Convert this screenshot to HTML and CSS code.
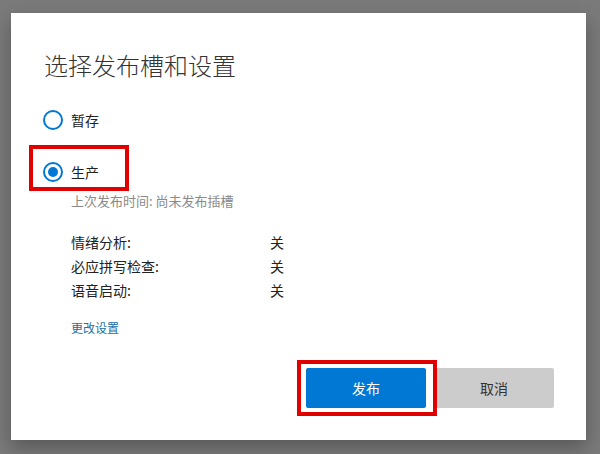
FILE: index.html
```html
<!DOCTYPE html>
<html lang="zh-CN">
<head>
<meta charset="utf-8">
<title>选择发布槽和设置</title>
<link rel="stylesheet" href="styles.css">
</head>
<body>
<div class="dialog">
  <h1 class="title">选择发布槽和设置</h1>
  <div class="options">
    <label class="option">
      <span class="radio"></span>
      <span class="option-text">暂存</span>
    </label>
    <label class="option option-highlight">
      <span class="radio radio-checked"></span>
      <span class="option-text">生产</span>
    </label>
  </div>
  <div class="details">
    <div class="last-published">上次发布时间: 尚未发布插槽</div>
    <div class="settings">
      <div class="setting-row"><span class="setting-label">情绪分析:</span><span class="setting-value">关</span></div>
      <div class="setting-row"><span class="setting-label">必应拼写检查:</span><span class="setting-value">关</span></div>
      <div class="setting-row"><span class="setting-label">语音启动:</span><span class="setting-value">关</span></div>
    </div>
    <a class="change-link" href="#">更改设置</a>
  </div>
  <div class="actions">
    <button class="btn btn-primary">发布</button>
    <button class="btn btn-secondary">取消</button>
  </div>
</div>
</body>
</html>
```
FILE: styles.css
```css
html, body {
  margin: 0;
  padding: 0;
}
body {
  width: 600px;
  height: 454px;
  overflow: hidden;
  background: #7a7a7a;
  font-family: "Noto Sans CJK SC", "Noto Sans", sans-serif;
}
.dialog {
  margin: 13px 0 0 11px;
  width: 575px;
  height: 427px;
  box-sizing: border-box;
  background: #fff;
  box-shadow: 0 8px 18px rgba(0, 0, 0, 0.28);
  padding: 36px 32px 0 33px;
  display: flex;
  flex-direction: column;
}
.title {
  margin: 0;
  font-size: 24px;
  line-height: 32px;
  font-weight: 300;
  color: #333;
}
.options {
  margin-top: 29px;
  display: flex;
  flex-direction: column;
  gap: 32px;
}
.option {
  position: relative;
  display: flex;
  align-items: center;
  gap: 8px;
  height: 20px;
  margin-left: -1px;
  font-size: 14px;
  color: #222;
}
.radio {
  width: 20px;
  height: 20px;
  box-sizing: border-box;
  border: 2px solid #0078d4;
  border-radius: 50%;
  display: flex;
  align-items: center;
  justify-content: center;
}
.radio-checked::after {
  content: "";
  width: 10px;
  height: 10px;
  border-radius: 50%;
  background: #0078d4;
}
.option-text {
  line-height: 20px;
}
.option-highlight::after {
  content: "";
  position: absolute;
  left: -14px;
  top: -17px;
  width: 100px;
  height: 46px;
  box-sizing: border-box;
  border: 4px solid #e00000;
}
.details {
  padding-left: 27px;
  display: flex;
  flex-direction: column;
  align-items: flex-start;
}
.last-published {
  margin-top: 10px;
  font-size: 13px;
  line-height: 18px;
  color: #8a8a8a;
}
.settings {
  margin-top: 20px;
}
.setting-row {
  display: flex;
  font-size: 14px;
  line-height: 24px;
  color: #222;
}
.setting-label {
  width: 199px;
}
.change-link {
  margin-top: 17px;
  font-size: 12px;
  line-height: 18px;
  color: #1a6fa3;
  text-decoration: none;
}
.actions {
  margin-top: 31px;
  display: flex;
  justify-content: flex-end;
  gap: 8px;
}
.btn {
  width: 120px;
  height: 40px;
  border: none;
  border-radius: 2px;
  font-family: inherit;
  font-size: 14px;
  padding: 0;
}
.btn-primary {
  position: relative;
  background: #0078d4;
  color: #fff;
}
.btn-primary::after {
  content: "";
  position: absolute;
  left: -9px;
  top: -8px;
  width: 140px;
  height: 56px;
  box-sizing: border-box;
  border: 4px solid #e00000;
}
.btn-secondary {
  background: #cccccc;
  color: #333;
}
```
